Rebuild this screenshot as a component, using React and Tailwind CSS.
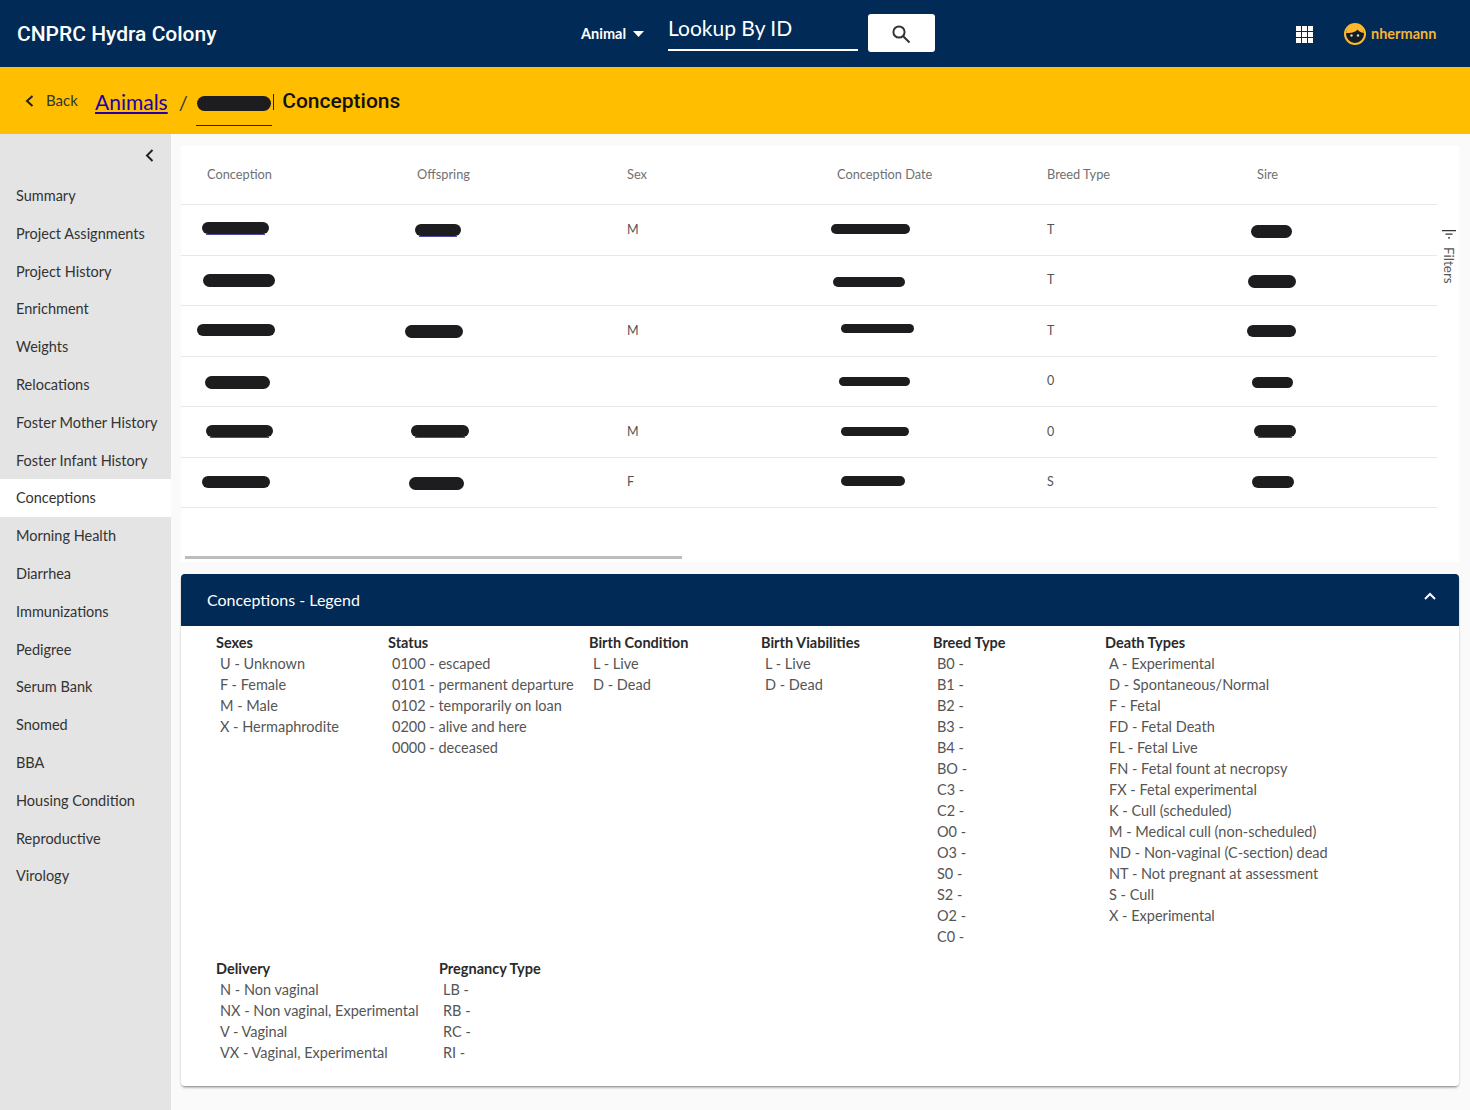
import React from "react";

const font = { fontFamily: '"Lato", "Liberation Sans", sans-serif' };

const nav = ["Summary","Project Assignments","Project History","Enrichment","Weights","Relocations","Foster Mother History","Foster Infant History","Conceptions","Morning Health","Diarrhea","Immunizations","Pedigree","Serum Bank","Snomed","BBA","Housing Condition","Reproductive","Virology"];

const rows = [
  { h: "h-[51px]", link: [0, 1], c: ["ml-[-5px] w-[67px] h-[12px] mt-[-5px]", "ml-[-2px] w-[46px] h-[12px] mt-[-1px]", "M", "ml-[-6px] w-[79px] h-[10px] mt-[-3px]", "T", "ml-[-6px] w-[41px] h-[13px] mt-[3px]"] },
  { h: "h-[50px]", link: [], c: ["ml-[-4px] w-[72px] h-[13px] mt-[0px]", null, "", "ml-[-4px] w-[72px] h-[10px] mt-[2px]", "T", "ml-[-9px] w-[48px] h-[13px] mt-[2px]"] },
  { h: "h-[51px]", link: [], c: ["ml-[-10px] w-[78px] h-[12px] mt-[-2px]", "ml-[-12px] w-[58px] h-[13px] mt-[1px]", "M", "ml-[4px] w-[73px] h-[9px] mt-[-6px]", "T", "ml-[-10px] w-[49px] h-[12px] mt-[0px]"] },
  { h: "h-[50px]", link: [], c: ["ml-[-2px] w-[65px] h-[13px] mt-[1px]", null, "", "ml-[2px] w-[71px] h-[9px] mt-[-1px]", "0", "ml-[-5px] w-[41px] h-[11px] mt-[1px]"] },
  { h: "h-[51px]", link: [0, 1, 5], c: ["ml-[-1px] w-[67px] h-[12px] mt-[-3px]", "ml-[-6px] w-[58px] h-[12px] mt-[-2px]", "M", "ml-[4px] w-[68px] h-[9px] mt-[-1px]", "0", "ml-[-3px] w-[42px] h-[12px] mt-[-3px]"] },
  { h: "h-[50px]", link: [], c: ["ml-[-5px] w-[68px] h-[12px] mt-[-1px]", "ml-[-8px] w-[55px] h-[13px] mt-[2px]", "F", "ml-[4px] w-[64px] h-[10px] mt-[-4px]", "S", "ml-[-5px] w-[42px] h-[12px] mt-[-1px]"] },
];

function Blob({ cls, link }) {
  return (
    <div className={`${cls} rounded-full bg-[#1d1d1f] relative`}>
      {link ? <div className="absolute left-[4px] right-[4px] bottom-[-1px] h-[1px] bg-[#4b4b9e]" /> : null}
    </div>
  );
}

function Legend({ title, items, cls }) {
  return (
    <div className={cls}>
      <div className="h-[21px] leading-[21px] text-[14.5px] font-bold text-[#2a2a2a]">{title}</div>
      {items.map((t) => (
        <div key={t} className="h-[21px] leading-[21px] pl-[4px] text-[14.5px] text-[#555] whitespace-nowrap">{t}</div>
      ))}
    </div>
  );
}

export default function App() {
  return (
    <div style={font} className="w-[1470px] h-[1110px] overflow-hidden bg-[#fafafa] flex flex-col">
      <header className="h-[67px] shrink-0 bg-[#012a56] flex items-center relative">
        <div className="pl-[17px] w-[581px] text-[21px] text-white whitespace-nowrap mt-[2px]" style={{ fontFamily: "Roboto, sans-serif", fontWeight: 500 }}>CNPRC Hydra Colony</div>
        <div className="flex items-center w-[87px] text-[14.5px] font-bold text-white">
          Animal
          <svg width="11" height="6" viewBox="0 0 11 6" className="ml-[7px] mt-[1px]"><path d="M0 0h11L5.5 6z" fill="#fff" /></svg>
        </div>
        <div className="w-[190px] h-[36px] mt-[-2px] border-b-2 border-white text-[21px] leading-[26px] text-white whitespace-nowrap">Lookup By ID</div>
        <button className="ml-[10px] w-[67px] h-[38px] mt-[-1px] rounded-[3px] bg-white flex items-center justify-center">
          <svg width="20" height="20" viewBox="0 0 20 20" fill="none" stroke="#333" strokeWidth="2" className="mr-[2px] mt-[2px]"><circle cx="8" cy="8" r="5.6" /><path d="M12.2 12.2 18.5 18.5" /></svg>
        </button>
        <div className="ml-[361px] grid grid-cols-3 gap-[1.5px] w-[17px] mt-[2px]">
          {Array.from({ length: 9 }).map((_, i) => <div key={i} className="w-[4.6px] h-[4.6px] bg-white" />)}
        </div>
        <svg width="22" height="22" viewBox="0 0 22 22" className="ml-[31px]">
          <circle cx="11" cy="11" r="10" fill="#141c26" stroke="#fdb92e" strokeWidth="2" />
          <path d="M2 10C3 4 7 1.5 11 1.500C16 1.500 19.500 5 20 10C17 9.500 14.500 8.500 13.500 6.500C12 9 7 10.500 2 10Z" fill="#fdb92e" />
          <circle cx="7.500" cy="12.500" r="1.200" fill="#d5d5d5" /><circle cx="14" cy="12.500" r="1.200" fill="#d5d5d5" />
        </svg>
        <div className="ml-[5px] text-[14.5px] font-bold text-[#f5b335]">nhermann</div>
      </header>

      <div className="h-[67px] shrink-0 bg-[#ffbf00] flex items-center">
        <svg width="9" height="12" viewBox="0 0 9 12" fill="none" stroke="#222" strokeWidth="2" className="ml-[25px]"><path d="M7.500 1 2 6l5.500 5" /></svg>
        <div className="ml-[12px] w-[49px] text-[15px] text-[#333]">Back</div>
        <a href="#" className="text-[21px] leading-[26px] text-[#2200aa] underline mt-[3px]">Animals</a>
        <div className="ml-[11px] text-[20px] text-[#333] mt-[2px]">/</div>
        <div className="ml-[8px] w-[76px] h-[46px] mt-[5px] border-b-[1.5px] border-[#222] flex justify-center items-start pt-[16px]">
          <div className="w-[74px] h-[15px] rounded-full bg-[#1d1d1f]" />
        </div>
        <div className="w-[1.5px] h-[16px] bg-[#222] mt-[2px] ml-[1px]" />
        <div className="ml-[8px] text-[21px] text-[#111] mt-[2px]" style={{ fontFamily: "Roboto, sans-serif", fontWeight: 500 }}>Conceptions</div>
      </div>

      <div className="flex flex-1 min-h-0">
        <aside className="w-[171px] shrink-0 bg-[#e4e4e4] flex flex-col">
          <div className="h-[43px] shrink-0 flex justify-end items-center pr-[17px]">
            <svg width="9" height="13" viewBox="0 0 9 13" fill="none" stroke="#222" strokeWidth="2"><path d="M7.500 1 2 6.500 7.500 12" /></svg>
          </div>
          {nav.map((n) => (
            <div key={n} className={`h-[37.8px] shrink-0 pl-[16px] flex items-center text-[14.5px] text-[#333] whitespace-nowrap ${n === "Conceptions" ? "bg-white" : ""}`}>{n}</div>
          ))}
        </aside>

        <main className="flex-1 pl-[10px] pr-[11px] pt-[12px]">
          <div className="h-[416px] bg-white flex">
            <div className="w-[1256px] shrink-0">
              <div className="flex h-[59px] border-b border-[#e8e8e8] items-center pl-[26px] text-[12.8px] text-[#707070]">
                {["Conception","Offspring","Sex","Conception Date","Breed Type","Sire"].map((h) => (
                  <div key={h} className="w-[210px] shrink-0">{h}</div>
                ))}
              </div>
              {rows.map((r, i) => (
                <div key={i} className={`flex ${r.h} border-b border-[#e8e8e8] items-center pl-[26px] text-[12.5px] text-[#555]`}>
                  {r.c.map((c, j) => (
                    <div key={j} className="w-[210px] shrink-0">
                      {j === 2 || j === 4 ? c : c ? <Blob cls={c} link={r.link.includes(j)} /> : null}
                    </div>
                  ))}
                </div>
              ))}
              <div className="ml-[4px] mt-[48px] w-[497px] h-[3px] bg-[#bdbdbd]" />
            </div>
            <div className="flex-1 pt-[84px] flex flex-col items-center pl-[1px]">
              <svg width="14" height="10" viewBox="0 0 14 10" fill="none" stroke="#333" strokeWidth="1.200"><path d="M0 .6h14M3.500 4.200h7M6 7.800h2" /></svg>
              <div className="mt-[7px] text-[13.5px] leading-[14px] text-[#555]" style={{ writingMode: "vertical-rl" }}>Filters</div>
            </div>
          </div>

          <section className="mt-[12px] bg-white rounded-[4px] shadow-[0_2px_3px_-1px_rgba(0,0,0,0.55)]">
            <div className="h-[52px] bg-[#012a56] rounded-t-[4px] flex items-center justify-between pl-[26px] pr-[23px] text-white">
              <div className="text-[16px] mt-[-1px]">Conceptions - Legend</div>
              <svg width="12" height="8" viewBox="0 0 12 8" fill="none" stroke="#fff" strokeWidth="2" className="mt-[-9px]"><path d="M1 7l5-5 5 5" /></svg>
            </div>
            <div className="pl-[35px] pt-[6px] h-[460px]">
              <div className="flex h-[326px]">
                <Legend cls="w-[172px]" title="Sexes" items={["U - Unknown","F - Female","M - Male","X - Hermaphrodite"]} />
                <Legend cls="w-[201px]" title="Status" items={["0100 - escaped","0101 - permanent departure","0102 - temporarily on loan","0200 - alive and here","0000 - deceased"]} />
                <Legend cls="w-[172px]" title="Birth Condition" items={["L - Live","D - Dead"]} />
                <Legend cls="w-[172px]" title="Birth Viabilities" items={["L - Live","D - Dead"]} />
                <Legend cls="w-[172px]" title="Breed Type" items={["B0 -","B1 -","B2 -","B3 -","B4 -","BO -","C3 -","C2 -","O0 -","O3 -","S0 -","S2 -","O2 -","C0 -"]} />
                <Legend cls="" title="Death Types" items={["A - Experimental","D - Spontaneous/Normal","F - Fetal","FD - Fetal Death","FL - Fetal Live","FN - Fetal fount at necropsy","FX - Fetal experimental","K - Cull (scheduled)","M - Medical cull (non-scheduled)","ND - Non-vaginal (C-section) dead","NT - Not pregnant at assessment","S - Cull","X - Experimental"]} />
              </div>
              <div className="flex">
                <Legend cls="w-[223px]" title="Delivery" items={["N - Non vaginal","NX - Non vaginal, Experimental","V - Vaginal","VX - Vaginal, Experimental"]} />
                <Legend cls="" title="Pregnancy Type" items={["LB -","RB -","RC -","RI -"]} />
              </div>
            </div>
          </section>
        </main>
      </div>
    </div>
  );
}
